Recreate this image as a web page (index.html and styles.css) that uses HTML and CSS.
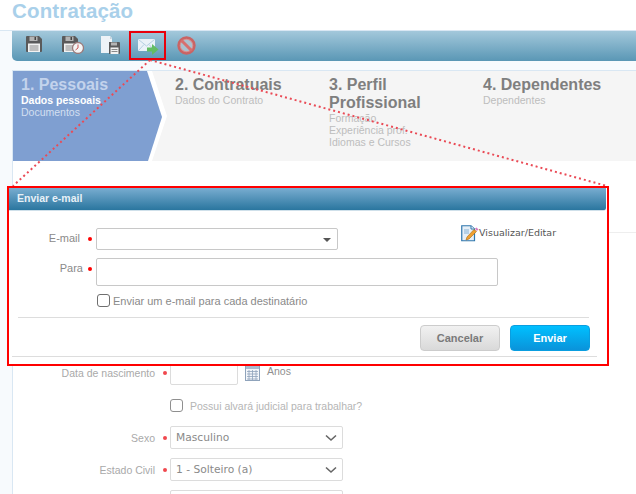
FILE: index.html
```html
<!DOCTYPE html>
<html lang="pt-BR">
<head>
<meta charset="utf-8">
<title>Contratação</title>
<link rel="stylesheet" href="styles.css">
</head>
<body>
<header class="page-title">Contratação</header>
<main class="shell">
  <nav class="toolbar">
    <span class="tool t1"><svg width="16" height="16" viewBox="0 0 16 16"><path d="M1 0H13L16 3V15a1 1 0 0 1-1 1H1a1 1 0 0 1-1-1V1a1 1 0 0 1 1-1z" fill="#5a5a5b"/><rect x="3.500" y="0.500" width="8" height="4.500" fill="#b4b4b4"/><rect x="8.500" y="1" width="1.500" height="3" fill="#444"/><rect x="2" y="7.500" width="12" height="8.500" fill="#f2f2f2"/><path d="M3.500 10h9M3.500 12h9M3.500 14h9" stroke="#8a8a8a" stroke-width="1"/></svg></span>
    <span class="tool t2"><svg width="22" height="18" viewBox="0 0 22 18"><path d="M1 0H13L16 3V15a1 1 0 0 1-1 1H1a1 1 0 0 1-1-1V1a1 1 0 0 1 1-1z" fill="#5a5a5b"/><rect x="3.500" y="0.500" width="8" height="4.500" fill="#b4b4b4"/><rect x="8.500" y="1" width="1.500" height="3" fill="#444"/><rect x="2" y="7.500" width="12" height="8.500" fill="#f2f2f2"/><path d="M3.500 10h9M3.500 12h9M3.500 14h9" stroke="#8a8a8a" stroke-width="1"/><circle cx="16" cy="12" r="5.500" fill="#f5f5f5" stroke="#9a7a7a" stroke-width="1.300"/><path d="M16 8.500V12L13.500 14" stroke="#c55" stroke-width="1" fill="none"/></svg></span>
    <span class="tool t3"><svg width="19" height="18" viewBox="0 0 19 18"><path d="M0 0H9L11 2V17H0z" fill="#eef3f7"/><path d="M9 0V3H11" fill="#c5d2dc"/><path d="M8 6H18a1 1 0 0 1 1 1V17a1 1 0 0 1-1 1H8z" fill="#5a5a5b"/><rect x="10" y="6.500" width="6" height="3" fill="#b4b4b4"/><rect x="9.500" y="11.500" width="8" height="6.500" fill="#f2f2f2"/><path d="M10.500 13.500h6M10.500 15.500h6" stroke="#8a8a8a"/></svg></span>
    <span class="tool t4"><svg width="21" height="17" viewBox="0 0 21 17"><rect x="0" y="0" width="17" height="12" rx="1" fill="#eaf2f8"/><path d="M0.500 0.500L8.500 7L16.500 0.500M0.500 11.500L6 5.500M16.500 11.500L11 5.500" stroke="#b4cfe2" fill="none"/><path d="M9 8.500H14V5L20.500 10.500L14 16V12.500H9z" fill="#63bd63"/></svg></span>
    <span class="tool t5"><svg width="19" height="19" viewBox="0 0 19 19"><circle cx="9.500" cy="9.500" r="8" fill="#d98f8f" stroke="#c96464" stroke-width="2.400"/><circle cx="9.500" cy="9.500" r="5.800" fill="#aac2d0"/><path d="M4.200 4.200L14.800 14.800" stroke="#d76f6f" stroke-width="3"/></svg></span>
  </nav>
  <section class="card">
    <div class="steps">
      <div class="step-active-wrap">
        <div class="step-active">
          <h2 class="step-head head-on">1. Pessoais</h2>
          <p class="step-sub sub-strong">Dados pessoais</p>
          <p class="step-sub sub-on">Documentos</p>
        </div>
      </div>
      <div class="step s2">
        <h2 class="step-head">2. Contratuais</h2>
        <p class="step-sub">Dados do Contrato</p>
      </div>
      <div class="step s3">
        <h2 class="step-head">3. Perfil Profissional</h2>
        <p class="step-sub">Formação</p>
        <p class="step-sub">Experiência prof.</p>
        <p class="step-sub">Idiomas e Cursos</p>
      </div>
      <div class="step s4">
        <h2 class="step-head">4. Dependentes</h2>
        <p class="step-sub">Dependentes</p>
      </div>
    </div>
    <form class="form">
      <div class="rule"></div>
      <div class="row row-date">
        <label class="lbl">Data de nascimento</label><i class="dot"></i>
        <span class="field date"></span>
        <svg class="cal" width="15" height="16" viewBox="0 0 15 16"><rect x="0.500" y="0.500" width="14" height="15" fill="#f3f6fa" stroke="#8fa3bb"/><rect x="1" y="1" width="13" height="3" fill="#a9bbd0"/><path d="M2 6.500h11M2 9h11M2 11.500h11M2 14h11M4 5v10M7.500 5v10M11 5v10" stroke="#8fa3bb" stroke-width="0.800"/></svg>
        <span class="anos">Anos</span>
      </div>
      <div class="row row-check">
        <span class="box"></span><span class="check-txt">Possui alvará judicial para trabalhar?</span>
      </div>
      <div class="row row-sel">
        <label class="lbl">Sexo</label><i class="dot"></i>
        <span class="field select">Masculino<svg class="chev" width="12" height="8" viewBox="0 0 12 8"><path d="M1 1.500L6 6L11 1.500" stroke="#666" stroke-width="1.600" fill="none"/></svg></span>
      </div>
      <div class="row row-sel">
        <label class="lbl">Estado Civil</label><i class="dot"></i>
        <span class="field select">1 - Solteiro (a)<svg class="chev" width="12" height="8" viewBox="0 0 12 8"><path d="M1 1.500L6 6L11 1.500" stroke="#666" stroke-width="1.600" fill="none"/></svg></span>
      </div>
      <div class="row row-sel"><span class="lbl"></span><i class="dot dot-off"></i><span class="field select"></span></div>
    </form>
  </section>
</main>

<svg class="callout" width="636" height="494" viewBox="0 0 636 494">
  <path d="M150 60L13 186M150 60L607 186" stroke="#ea4a55" stroke-width="2" stroke-dasharray="2 3" fill="none"/>
</svg>
<div class="tool-mark"></div>

<div class="modal">
  <div class="modal-bar">Enviar e-mail</div>
  <div class="modal-body">
    <div class="m-top">
      <div class="m-fields">
        <div class="m-row m-r1">
          <span class="m-lbl l1">E-mail</span><i class="m-dot"></i>
          <span class="m-select"><b class="caret"></b></span>
        </div>
        <div class="m-row m-r2">
          <span class="m-lbl">Para</span><i class="m-dot d2"></i>
          <span class="m-input"></span>
        </div>
        <div class="m-check"><span class="m-box"></span><span>Enviar um e-mail para cada destinatário</span></div>
      </div>
      <a class="preview">
        <svg width="18" height="17" viewBox="0 0 18 17"><path d="M0.750 0.750H10L13.500 4V15.750H0.750z" fill="#e6eff7" stroke="#2f77ad" stroke-width="1.200"/><path d="M10 1V4H13.500" fill="#fff" stroke="#2f77ad"/><rect x="3" y="4" width="5" height="5" fill="#b5d0e6"/><path d="M5 15L6 12L13 4.500L15.500 6.500L8 14z" fill="#f0a030" stroke="#a86a10" stroke-width="0.600"/><path d="M14 3.500L15.500 2.500L17.500 4.500L15.800 6z" fill="#d77bc0"/></svg>
        <span>Visualizar/Editar</span>
      </a>
    </div>
    <div class="m-actions">
      <button type="button" class="btn btn-cancel">Cancelar</button>
      <button type="button" class="btn btn-send">Enviar</button>
    </div>
    <div class="m-foot"></div>
  </div>
</div>
</body>
</html>
```

FILE: styles.css
```css
* { box-sizing: border-box; }
html, body { margin: 0; padding: 0; }
body {
  width: 636px;
  height: 494px;
  overflow: hidden;
  background: #fff;
  font-family: "Liberation Sans", Arial, sans-serif;
  position: relative;
}
p, h2 { margin: 0; font-weight: normal; }

.page-title {
  height: 30px;
  padding: 0 0 0 12px;
  font-size: 20.500px;
  line-height: 22px;
  font-weight: bold;
  color: #a9d0ea;
  letter-spacing: 0.150px;
}

.shell {
  height: 464px;
  padding-left: 12px;
  background: #f7fafd;
  border-top: 1px solid #d9e7f3;
}

.toolbar {
  height: 30px;
  display: flex;
  align-items: flex-start;
  background: linear-gradient(#a3c8db, #5a97b5);
  border-bottom-left-radius: 5px;
}
.tool { display: block; height: 20px; }
.tool svg { display: block; }
.t1 { margin: 5px 0 0 14px; }
.t2 { margin: 5px 0 0 20px; }
.t3 { margin: 5px 0 0 17px; }
.t4 { margin: 8px 0 0 18px; }
.t5 { margin: 5px 0 0 18px; }

.card {
  margin-top: 9px;
  height: 425px;
  background: #fff;
  border-top: 1px solid #d9e7f3;
  border-left: 1px solid #d9e7f3;
}

.steps {
  height: 90px;
  display: flex;
  background: #f5f5f5;
}
.step-active-wrap {
  width: 154px;
  flex: none;
  background: #fff;
  clip-path: polygon(0 0, 139px 0, 154px 45px, 139px 90px, 0 90px);
}
.step-active {
  height: 90px;
  padding: 5px 0 0 8px;
  background: #7f9fd1;
  clip-path: polygon(0 0, 134px 0, 149px 46px, 135px 90px, 0 90px);
}
.step { width: 154px; flex: none; padding: 5px 10px 0 8px; }
.step-head {
  font-size: 16px;
  line-height: 18px;
  font-weight: bold;
  color: #7f7f7f;
}
.step-sub {
  font-size: 10.500px;
  line-height: 12px;
  color: #bdbdbd;
}
.head-on { color: #c3d3ec; }
.sub-strong { color: #fff; font-weight: bold; }
.sub-on { color: #d3dff0; }
.s3 .step-head { padding-right: 20px; }

.form { height: 334px; }
.rule {
  margin-top: 71px;
  border-top: 1px solid #eee;
}
.row {
  display: flex;
  align-items: center;
  font-size: 10.500px;
  color: #a9a9a9;
}
.lbl { width: 142px; text-align: right; flex: none; }
.dot {
  width: 4px; height: 4px;
  margin: 1px 3px 0 8px;
  border-radius: 50%;
  background: #f0484e;
  flex: none;
}
.dot-off { visibility: hidden; }
.field {
  display: flex;
  align-items: center;
  border: 1px solid #dcdcdc;
  border-radius: 2px;
  background: #fff;
}
.row-date { margin-top: 127px; height: 25px; }
.date { width: 68px; height: 25px; }
.cal { margin: 0 0 0 7px; }
.anos { margin: -3px 0 0 7px; color: #8f8f8f; }
.row-check { margin-top: 14px; height: 13px; padding-left: 157px; }
.box {
  width: 13px; height: 13px;
  border: 1px solid #8f8f8f;
  border-radius: 3px;
  background: #fff;
  flex: none;
}
.check-txt { margin-left: 7px; color: #b5b5b5; }
.row-sel { margin-top: 9px; height: 23px; }
.row-check + .row-sel { margin-top: 14px; }
.select {
  width: 173px;
  height: 23px;
  padding: 0 5px;
  justify-content: space-between;
  color: #8a8a8a;
  font-family: "DejaVu Sans", sans-serif;
  font-size: 10.700px;
}
.chev { flex: none; }

.callout { position: absolute; left: 0; top: 0; pointer-events: none; }
.tool-mark {
  position: absolute;
  left: 129px; top: 31px;
  width: 37px; height: 29px;
  border: 2px solid #e8000b;
}

.modal {
  position: absolute;
  left: 7px; top: 186px;
  width: 602px; height: 180px;
  border: 2px solid #f00;
  background: #fff;
  display: flex;
  flex-direction: column;
}
.modal-bar {
  height: 23px;
  margin-right: 1px;
  padding-left: 8px;
  font-size: 10.500px;
  line-height: 21px;
  font-weight: bold;
  color: #e8f1f7;
  background: linear-gradient(#79add0, #2a769f);
  border-bottom: 1px solid #cfe0ea;
  border-bottom-right-radius: 3px;
}
.modal-body { flex: 1; display: flex; flex-direction: column; }
.m-top { height: 107px; margin: 0 18px 0 9px; border-bottom: 1px solid #ddd; position: relative; }
.m-fields { padding-top: 17px; }
.m-row { display: flex; align-items: flex-start; font-size: 11px; color: #8a8a8a; }
.m-r1 { height: 22px; }
.m-r2 { height: 28px; margin-top: 8px; }
.m-lbl { width: 65px; text-align: right; flex: none; line-height: 20px; }
.m-r1 .l1 { width: 62px; margin-right: 3px; }
.m-dot {
  width: 4px; height: 4px;
  margin: 9px 4px 0 5px;
  border-radius: 50%;
  background: #f00;
  flex: none;
}
.m-select {
  width: 242px;
  height: 22px;
  border: 1px solid #c8c8c8;
  border-radius: 2px;
  position: relative;
  flex: none;
}
.caret {
  position: absolute;
  right: 6px; top: 9px;
  border-top: 4px solid #555;
  border-left: 4px solid transparent;
  border-right: 4px solid transparent;
}
.m-input {
  width: 402px;
  height: 28px;
  border: 1px solid #c8c8c8;
  border-radius: 2px;
  flex: none;
}
.m-check {
  display: flex;
  align-items: center;
  margin: 8px 0 0 79px;
  height: 13px;
  font-size: 11px;
  color: #8a8a8a;
}
.m-box {
  width: 13px; height: 13px;
  margin-right: 3px;
  border: 1px solid #6f6f6f;
  border-radius: 3px;
  flex: none;
}
.preview {
  position: absolute;
  left: 443px; top: 14px;
  display: flex;
  align-items: flex-start;
  font-family: "DejaVu Sans", sans-serif;
  font-size: 9.500px;
  line-height: 14px;
  color: #555;
}
.preview span { margin: 1px 0 0 0; }
.m-actions {
  display: flex;
  justify-content: flex-end;
  gap: 10px;
  margin: 7px 17px 0 0;
}
.btn {
  width: 80px;
  height: 26px;
  padding: 0;
  border-radius: 4px;
  font-family: "Liberation Sans", Arial, sans-serif;
  font-size: 11px;
  font-weight: bold;
}
.btn-cancel {
  border: 1px solid #ccc;
  background: linear-gradient(#f1f1f1, #d9d9d9);
  color: #7a7a7a;
}
.btn-send {
  border: 1px solid #0a9ee0;
  background: linear-gradient(#00c0ff, #0a93da);
  color: #fff;
}
.m-foot {
  margin: 5px 10px 0 3px;
  border-top: 1px solid #ddd;
}
```
